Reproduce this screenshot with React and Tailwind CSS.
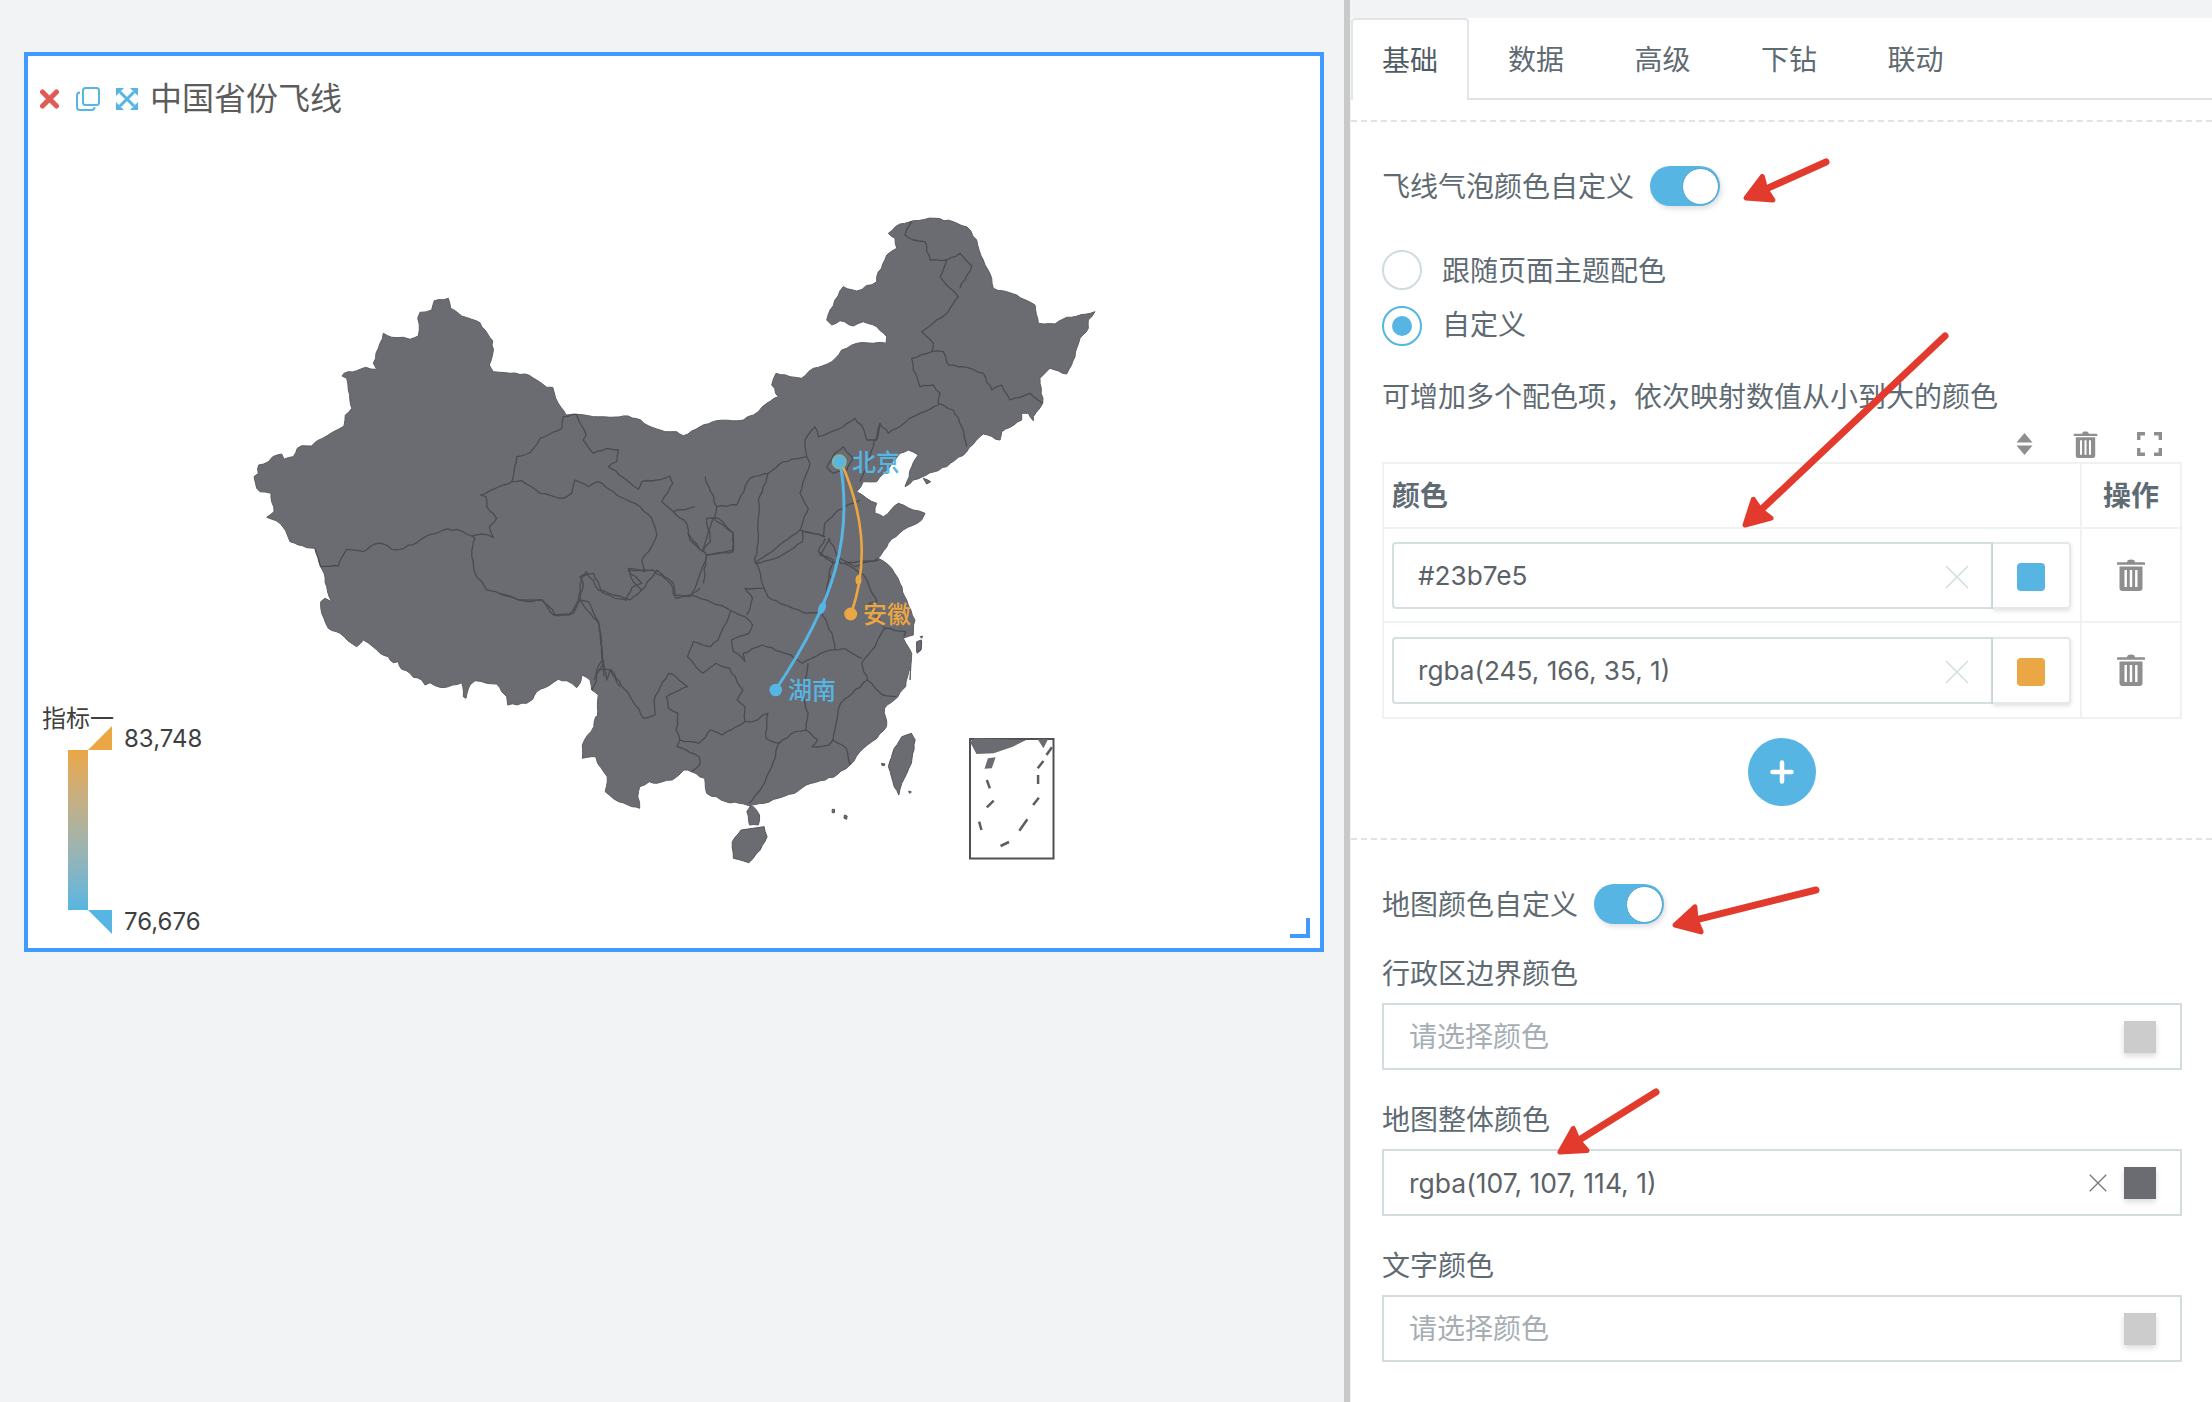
import React from "react";

const z3 = (a) => a.map(([x, y]) => [200 + x / 3, 280 + y / 3]);
const z2 = (a) => a.map(([x, y]) => [700 + x / 3, 180 + y / 3]);
const z4 = (a) => a.map(([x, y]) => [500 + x / 2.613, 500 + y / 3]);
const z11 = (a) => a.map(([x, y]) => [380 + x / 3, 640 + y / 3]);

let seed = 7;
const rnd = () => {
  seed = (seed * 16807) % 2147483647;
  return seed / 2147483647 - 0.5;
};
const jag = (pts, amp = 1.1, step = 5) => {
  const out = [];
  for (let i = 0; i < pts.length - 1; i++) {
    const [x0, y0] = pts[i];
    const [x1, y1] = pts[i + 1];
    const len = Math.hypot(x1 - x0, y1 - y0) || 1;
    const n = Math.max(1, Math.round(len / step));
    out.push([x0, y0]);
    for (let k = 1; k < n; k++) {
      const t = k / n;
      const j = rnd() * amp * 2;
      out.push([x0 + (x1 - x0) * t - ((y1 - y0) / len) * j, y0 + (y1 - y0) * t + ((x1 - x0) / len) * j]);
    }
  }
  out.push(pts[pts.length - 1]);
  return out;
};
const d = (pts, close, amp) => {
  const p = jag(pts, amp);
  return "M" + p.map(([x, y]) => `${x.toFixed(1)} ${y.toFixed(1)}`).join("L") + (close ? "Z" : "");
};

const outline = [
  ...z3([[162,590],[175,580],[176,555],[205,545],[218,530],[245,522],[252,538],[280,530],[292,505],[305,497],[335,498],[352,482],[395,458],[432,438],[436,405],[455,385],[445,330],[440,295],[426,288],[432,280],[470,272],[497,262],[530,268],[520,250],[535,205],[550,160],[575,172],[610,172],[630,178],[655,168],[658,150],[653,115],[660,97],[695,90],[703,62],[745,55],[752,85],[785,108],[815,118],[840,128],[855,150],[878,182],[878,222],[868,255],[880,275],[930,280],[975,282],[1010,300],[1040,322],[1058,322],[1075,370],[1098,405],[1130,403],[1180,410],[1230,412],[1285,408],[1322,420],[1345,437],[1395,455],[1430,455],[1450,467]]),
  ...z2([[0,740],[50,722],[130,720],[175,695],[200,670],[235,650],[215,615],[228,580],[270,590],[305,595],[340,565],[395,545],[425,510],[470,490],[520,490],[558,490],[560,470],[530,440],[490,425],[460,438],[420,422],[395,435],[380,420],[390,390],[430,320],[470,333],[530,305],[530,290],[560,225],[590,205],[585,175],[565,160],[600,132],[640,122],[705,115],[760,125],[800,140],[830,180],[850,240],[875,295],[880,325],[950,345],[1005,375],[1015,430],[1065,432],[1100,412],[1185,395],[1165,420],[1165,445],[1140,475],[1125,530],[1100,582],[1050,565],[1020,595],[1028,670],[1000,710],[1000,722],[985,700],[965,700],[965,720],[905,755],[900,780],[850,762],[800,815],[740,860],[690,878],[640,900],[615,920],[635,860],[655,825],[625,810],[600,820],[570,860],[530,905],[490,905],[470,935],[500,955],[530,970],[525,1000],[550,1010],[595,970],[640,990],[675,1000],[665,1020],[610,1050],[565,1090],[535,1135],[575,1165],[600,1210],[620,1260],[645,1320],[640,1365],[610,1375],[635,1420],[630,1500]]),
  ...z4([[1072,500],[1060,560],[1040,590],[1005,625],[1010,680],[985,715],[950,745],[915,795],[880,825],[850,840],[800,855],[770,880],[740,890],[690,910],[655,915],[645,935],[652,975],[675,975],[678,945],[660,918],[625,910],[590,905],[540,880],[535,835],[500,815],[480,810],[450,840],[410,850],[390,845],[365,860],[360,890],[365,925],[345,920],[310,905],[275,875],[280,830],[255,790],[250,770],[215,775],[215,735],[245,680],[250,650]]),
  ...z11([[652,230],[655,165],[635,150],[630,120],[605,105],[600,130],[590,143],[560,122],[535,118],[510,135],[470,155],[458,178],[440,190],[383,195],[380,170],[365,155],[350,132],[320,130],[285,122],[270,135],[258,175],[250,170],[245,128],[205,140],[180,142],[150,128],[135,135],[125,120],[100,112],[90,100],[65,88],[55,65],[40,68],[25,50],[0,40]]),
  ...z3([[490,1080],[470,1100],[420,1060],[385,1045],[365,1000],[362,965],[375,955],[395,965],[380,920],[372,880],[362,860],[345,805],[320,803],[270,785],[262,765],[240,730],[200,712],[222,695],[213,640],[180,635],[170,625]]),
];

const borders = [
  z3([[345,805],[362,860],[415,858],[440,808],[490,815],[525,792],[550,792],[575,808],[600,808],[650,788],[680,768],[730,750],[770,748],[815,768],[845,762],[880,772],[868,740],[890,715],[860,680],[858,650],[842,645],[935,605],[950,530],[990,518],[1020,475],[1050,462],[1085,445],[1090,410],[1130,403]]),
  z3([[815,768],[825,775],[815,815],[825,880],[860,930],[930,950],[985,965],[1025,960],[1058,990],[1065,1005],[1120,1000],[1140,960],[1165,965],[1195,1025],[1205,1100],[1212,1190]]),
  z3([[935,605],[965,602],[1020,640],[1090,655],[1115,640],[1125,600],[1165,620],[1195,605],[1250,645],[1320,680],[1355,715],[1370,765],[1355,800],[1325,840],[1335,875],[1285,865],[1300,905],[1325,930],[1290,960],[1240,945],[1195,930],[1160,875],[1140,890],[1150,910],[1140,960]]),
  z3([[1130,403],[1158,465],[1150,480],[1180,520],[1220,505],[1255,510],[1250,545],[1225,560],[1280,600],[1315,628],[1325,605],[1355,603],[1410,588],[1418,610],[1385,665],[1420,695],[1485,680]]),
  z3([[1325,930],[1370,870],[1420,910],[1425,945],[1470,950],[1500,925]]),
  z3([[1420,695],[1460,730],[1470,780],[1500,810]]),
  z4([[0,280],[50,300],[110,300],[140,345],[180,345],[205,300],[215,230],[245,220],[265,275],[300,295],[330,300],[345,262],[370,250],[335,210],[375,210],[400,210],[445,250],[460,295],[500,285],[540,300],[600,330],[640,350],[660,375],[650,400],[605,420],[610,455],[630,470],[640,485]]),
  z4([[210,300],[260,375],[270,490],[245,540]]),
  z4([[255,510],[290,510],[340,590],[375,655],[405,645],[405,590],[440,520],[460,530],[490,560],[435,590],[440,625],[465,640],[460,690],[470,720],[462,740],[520,770],[522,795],[500,815]]),
  z4([[605,330],[570,420],[550,440],[505,425],[490,470],[530,520],[565,490],[600,505],[635,570],[620,600],[640,620],[640,665],[580,705],[550,690],[520,730],[470,720]]),
  z4([[640,665],[660,665],[700,640],[695,715],[730,730],[770,695],[800,690],[805,640],[795,600],[805,490]]),
  z4([[730,725],[710,800],[685,860],[650,910]]),
  z4([[800,690],[830,720],[815,740],[860,735],[870,720],[905,745],[915,795]]),
  z4([[870,720],[890,610],[960,540],[1000,585],[1035,590]]),
  z4([[960,540],[945,490],[980,440],[1005,385]]),
  z4([[640,485],[635,460],[685,435],[760,465],[790,490],[850,455],[900,445],[945,475]]),
  z4([[875,450],[868,400],[840,340],[800,340],[745,315],[700,290],[690,265],[640,265],[660,295],[645,345]]),
  z4([[670,190],[730,170],[790,125],[790,95],[850,110]]),
  z4([[670,190],[690,265]]),
  z4([[835,165],[870,180],[860,220],[870,240]]),
  z4([[560,50],[530,150],[540,165],[510,265],[500,285]]),
  z4([[490,100],[530,155],[550,125],[540,55],[570,55],[610,100],[610,155],[540,165]]),
  z4([[900,190],[950,225],[975,285],[985,305],[965,310],[1005,385],[1060,395],[1055,410]]),
  z4([[860,225],[850,290],[840,340]]),
  z4([[835,165],[860,115],[890,190],[900,190],[990,180]]),
  z2([[320,830],[315,780],[345,740],[355,770],[430,740],[465,715],[490,745],[500,780],[530,780],[540,730],[565,760],[640,710],[715,675],[720,640],[700,615],[660,620],[640,570],[635,535],[695,515],[700,490],[665,455],[745,395],[775,350],[750,325],[720,290],[740,240],[690,240],[675,185],[640,180],[615,165],[635,125]]),
  z2([[740,240],[780,220],[815,258],[780,325]]),
  z2([[695,515],[730,515],[745,555],[790,560],[850,580],[875,630],[905,615],[930,660],[990,640],[1028,670]]),
  z2([[715,670],[760,690],[785,740],[800,800]]),
  z2([[540,730],[520,800],[505,850],[480,905]]),
  z2([[380,860],[400,825],[430,800],[460,835],[440,870],[400,880],[380,860]]),
  z2([[320,830],[250,845],[205,880],[175,960],[175,1060],[165,1150]]),
  z2([[205,880],[150,895],[110,975],[50,980],[15,890]]),
  z2([[320,830],[330,850],[300,940],[325,985],[300,1050],[370,1070],[375,1030],[415,990],[480,960]]),
  z2([[300,1050],[165,1150]]),
  z2([[375,1075],[355,1115],[400,1150],[420,1135],[465,1160],[535,1135]]),
  z2([[50,980],[45,1020],[100,1060],[100,1110],[20,1125],[10,1210]]),
  z11([[665,0],[668,60],[650,90],[650,120],[635,150]]),
  z11([[668,60],[680,120],[690,90],[720,140]]),
];

const islands = [
  z4([[1075,700],[1085,720],[1075,790],[1050,850],[1042,885],[1030,860],[1015,800],[1030,745],[1050,710]]),
  z4([[690,980],[698,1010],[680,1050],[650,1088],[610,1075],[607,1025],[630,990]]),
  z4([[868,928],[874,928],[874,938],[868,938]]),
  z4([[900,945],[907,948],[906,958],[899,955]]),
  z4([[997,790],[1006,792],[1004,797],[998,796]]),
  z4([[1068,873],[1075,876],[1070,880]]),
  z4([[1090,430],[1102,425],[1100,450],[1090,460]]),
  z4([[1098,410],[1104,408],[1102,415]]),
  z2([[650,1385],[664,1380],[662,1410],[650,1415]]),
  z2([[670,895],[692,905],[680,912]]),
];

const dashes = [
  [[1272,840],[1280,865]], [[1290,902],[1272,922]], [[1252,965],[1258,990]], [[1330,1026],[1308,1038]],
  [[1378,958],[1357,992]], [[1408,893],[1393,915]], [[1406,825],[1406,852]], [[1420,783],[1405,805]], [[1442,742],[1428,765]],
];

const mapOutline = d(outline, true, 0.9);
const mapBorders = borders.map((b) => d(b, false, 0.9));
const mapIslands = islands.map((b) => d(b, true, 0.5));

function ChinaMap() {
  return (
    <svg className="absolute inset-0 w-full h-full" viewBox="28 56 1292 892" fill="none">
      <path d={mapOutline} fill="#6b6b72" stroke="#5d5d63" strokeWidth="1" strokeLinejoin="round" />
      {mapIslands.map((p, i) => (
        <path key={i} d={p} fill="#6b6b72" stroke="#55555b" strokeWidth="1" />
      ))}
      {mapBorders.map((p, i) => (
        <path key={i} d={p} stroke="#4b4b51" strokeWidth="1.3" strokeLinejoin="round" />
      ))}

      <rect x="970" y="739" width="83.5" height="119.5" stroke="#505054" strokeWidth="2" />
      <path d={"M" + z4([[1228,725],[1240,715],[1375,720],[1340,740],[1290,760],[1245,762]]).map((p) => p.join(" ")).join("L") + "Z"} fill="#6b6b72" />
      <path d={"M" + z4([[1405,718],[1432,718],[1420,745]]).map((p) => p.join(" ")).join("L") + "Z"} fill="#6b6b72" />
      <path d={"M" + z4([[1275,775],[1295,772],[1285,805],[1266,806]]).map((p) => p.join(" ")).join("L") + "Z"} fill="#6b6b72" />
      {dashes.map((s, i) => {
        const [a, b] = z4(s);
        return <line key={i} x1={a[0]} y1={a[1]} x2={b[0]} y2={b[1]} stroke="#5c5c62" strokeWidth="2.5" />;
      })}

      <path d="M840 462C853 535 836 600 775.5 690" stroke="#56b5e2" strokeWidth="3" />
      <path d="M841 462C862 510 870 560 851 614" stroke="#eba743" strokeWidth="2.6" />
      <ellipse cx="822" cy="608" rx="3.6" ry="6.5" fill="#56b5e2" transform="rotate(22 822 608)" />
      <ellipse cx="858.5" cy="580" rx="3" ry="5" fill="#eba743" />
      <circle cx="839.3" cy="461.7" r="6.5" fill="#56b5e2" stroke="#84b3a0" strokeWidth="2" />
      <circle cx="850.7" cy="614" r="6.5" fill="#eba743" />
      <circle cx="775.7" cy="690" r="6.3" fill="#56b5e2" />
      <g fontSize="24" fontWeight="500" fontFamily="'Noto Sans CJK SC', sans-serif">
        <text x="852" y="471" fill="#56b5e2">北京</text>
        <text x="863" y="623" fill="#eba743">安徽</text>
        <text x="788" y="699" fill="#56b5e2">湖南</text>
      </g>
    </svg>
  );
}

function Arrow({ x1, y1, x2, y2, head = 27, spread = 0.5 }) {
  const a = Math.atan2(y1 - y2, x1 - x2);
  const px = (t) => x2 + Math.cos(a + t) * head;
  const py = (t) => y2 + Math.sin(a + t) * head;
  const mx = x2 + Math.cos(a) * head * 0.8;
  const my = y2 + Math.sin(a) * head * 0.8;
  return (
    <g>
      <line x1={x1} y1={y1} x2={mx} y2={my} stroke="#e33a2e" strokeWidth="7" strokeLinecap="round" />
      <polygon
        points={`${x2},${y2} ${px(spread)},${py(spread)} ${mx},${my} ${px(-spread)},${py(-spread)}`}
        fill="#e33a2e"
        stroke="#e33a2e"
        strokeWidth="5"
        strokeLinejoin="round"
      />
    </g>
  );
}

function Trash({ className }) {
  return (
    <svg className={className} viewBox="0 0 28 32">
      <path d="M10 3.2C10.5 1.2 11.5 .6 14 .6s3.5 .6 4 2.6h9c.6 0 1 .4 1 1v1.6H0V4.2c0-.6 .4-1 1-1z" fill="#8e8e8e" />
      <path d="M2.5 7.5h23V29a3 3 0 0 1-3 3h-17a3 3 0 0 1-3-3z" fill="#8e8e8e" />
      <path d="M7.5 11h2.4v17H7.5zM12.8 11h2.4v17h-2.4zM18.1 11h2.4v17h-2.4z" fill="#fff" />
    </svg>
  );
}

function XIcon({ className, color }) {
  return (
    <svg className={className} viewBox="0 0 24 24" fill="none" stroke={color} strokeWidth="1.6">
      <path d="M1 1L23 23M23 1L1 23" />
    </svg>
  );
}

function Toggle() {
  return (
    <div className="w-[70px] h-10 rounded-full bg-[#56b5e2] flex items-center justify-end pr-[1px] shadow-[2px_3px_5px_rgba(0,0,0,0.12)]">
      <div className="w-[37px] h-[37px] rounded-full bg-white border border-[#4aa3cf]" />
    </div>
  );
}

function Radio({ on }) {
  return (
    <div className={`w-10 h-10 rounded-full border-2 flex items-center justify-center ${on ? "border-[#56b5e2]" : "border-[#cfdbdf]"}`}>
      {on && <div className="w-5 h-5 rounded-full bg-[#56b5e2]" />}
    </div>
  );
}

const latin = "[font-family:'Inter','Noto_Sans_CJK_SC',sans-serif]";

function ColorRow({ value, color, last }) {
  return (
    <div className={`grid grid-cols-[1fr_98px] h-[94px] ${last ? "" : "border-b-2 border-[#eef2f3]"}`}>
      <div className="pl-[8px] pr-[9px] flex items-center border-r-2 border-[#eef2f3]">
        <div className="flex w-full h-[67px]">
          <div className={`flex-1 flex items-center border-2 border-[#d5dfe1] rounded-l-[4px] pl-[24px] pr-[12px] text-[26.2px] ${latin} text-[#5b6268]`}>
            <span className="flex-1 pt-[2px]">{value}</span>
            <XIcon className="w-6 h-6 mt-1 mr-[10px]" color="#d3dfdf" />
          </div>
          <div className="w-[78px] flex items-center justify-center border-y-2 border-r-2 border-[#e3e8ea] rounded-r-[4px] shadow-[0_2px_4px_rgba(0,0,0,0.12)]">
            <div className="w-7 h-7 rounded-[4px] mt-1" style={{ background: color }} />
          </div>
        </div>
      </div>
      <div className="flex items-center justify-center">
        <Trash className="w-7 h-8" />
      </div>
    </div>
  );
}

function ColorField({ value }) {
  return (
    <div className="mt-2 h-[67px] border-2 border-[#d3dde0] flex items-center pl-[25px] pr-[24px] text-[28px]">
      {value ? (
        <>
          <span className={`flex-1 pt-[1px] text-[#5b6268] text-[26.5px] ${latin}`}>{value}</span>
          <XIcon className="w-[18px] h-[18px] mr-[17px]" color="#6d7378" />
          <div className="w-8 h-8 bg-[#6b6b72] shadow-[0_3px_6px_rgba(0,0,0,0.15)]" />
        </>
      ) : (
        <>
          <span className="flex-1 pt-[3px] text-[#a6aeb3]">请选择颜色</span>
          <div className="w-8 h-8 bg-[#cccccc] shadow-[0_3px_6px_rgba(0,0,0,0.15)]" />
        </>
      )}
    </div>
  );
}

const Dashed = ({ className }) => <div className={`border-t-2 border-dashed border-[#dfe3e6] ${className}`} />;

export default function App() {
  const tabs = ["数据", "高级", "下钻", "联动"];
  return (
    <div className="relative w-[2212px] h-[1402px] overflow-hidden flex bg-[#f1f3f5] text-[28px] leading-10 text-[#5f6b73] [font-family:'Liberation_Sans','Noto_Sans_CJK_SC',sans-serif]">
      <div className="w-[1344px] shrink-0 pt-[52px] pl-6 pr-5">
        <div className="relative h-[900px] border-4 border-[#3f9bff] bg-white">
          <ChinaMap />
          <div className="relative flex items-center pt-[2px] pl-3 h-[84px]">
            <svg className="w-[19px] h-5" viewBox="0 0 19 20" fill="none" stroke="#e25a56" strokeWidth="5" strokeLinecap="round">
              <path d="M2.5 3L16.5 17M16.5 3L2.5 17" />
            </svg>
            <svg className="ml-[17px] w-6 h-6" viewBox="0 0 24 24" fill="none" stroke="#56b5e2" strokeWidth="2">
              <rect x="7" y="1" width="16" height="17" rx="2.5" />
              <path d="M4 5.5A3 3 0 0 0 1 8.5V20a3 3 0 0 0 3 3h11.5a3 3 0 0 0 3-3" />
            </svg>
            <svg className="ml-4 w-[22px] h-[22px]" viewBox="0 0 22 22" fill="none" stroke="#56b5e2" strokeWidth="3">
              <path d="M4 4L18 18M18 4L4 18" />
              <path d="M0 0h8L0 8zM22 0h-8L22 8zM0 22h8L0 14zM22 22h-8L22 14z" fill="#56b5e2" stroke="none" />
            </svg>
            <span className="ml-[12px] text-[32px] text-[#5c5c5c]">中国省份飞线</span>
          </div>
          <div className="absolute left-[14px] top-[643px] text-2xl leading-10 text-[#3f3f3f]">指标一</div>
          <div className={`absolute left-[96px] top-[663px] leading-10 text-[#3f3f3f] text-[24px] ${latin}`}>83,748</div>
          <div className={`absolute left-[96px] top-[846px] leading-10 text-[#3f3f3f] text-[24px] ${latin}`}>76,676</div>
          <div className="absolute left-10 top-[694px] w-5 h-40 bg-gradient-to-b from-[#eba743] to-[#56b5e2]" />
          <svg className="absolute left-[60px] top-[670px] w-6 h-6" viewBox="0 0 24 24"><path d="M0 24L24 0V24z" fill="#eba743" /></svg>
          <svg className="absolute left-[60px] top-[854px] w-6 h-6" viewBox="0 0 24 24"><path d="M0 0H24V24z" fill="#56b5e2" /></svg>
          <div className="absolute right-[10px] bottom-[10px] w-5 h-5 border-r-4 border-b-4 border-[#3f9bff]" />
        </div>
      </div>

      <div className="w-[6px] shrink-0 bg-[#c8cac9]" />
      <div className="w-px shrink-0" />

      <div className="flex-1 mt-[18px] bg-white">
        <div className="flex h-[82px] border-b-2 border-[#dfe3e6]">
          <div className="w-[118px] h-[82px] border-2 border-b-0 border-[#e3e6e8] rounded-t-[4px] bg-white flex items-center justify-center text-[#505c64] pt-[4px]">基础</div>
          {tabs.map((t) => (
            <div key={t} className="w-[126.5px] flex items-center pl-[39px] pt-[6px]">{t}</div>
          ))}
        </div>
        <Dashed className="mt-5" />

        <div className="pl-[31px] pr-[30px]">
          <div className="mt-[44px] flex items-center gap-[16px] h-10">
            <span className="pt-[3px]">飞线气泡颜色自定义</span>
            <Toggle />
          </div>
          <div className="mt-[44px] flex items-center gap-5 h-10">
            <Radio />
            <span className="pt-[3px]">跟随页面主题配色</span>
          </div>
          <div className="mt-4 flex items-center gap-5 h-10">
            <Radio on />
            <span>自定义</span>
          </div>
          <div className="mt-[30px] h-10 pt-[2px]">可增加多个配色项，依次映射数值从小到大的颜色</div>

          <div className="mt-4 h-6 flex justify-end pr-[20px]">
            <svg className="w-[17px] h-6" viewBox="0 0 17 24" fill="#8e8e8e">
              <path d="M8.5 1L16.5 10.5H.5zM8.5 23L.5 13.5H16.5z" />
            </svg>
            <Trash className="ml-[40px] w-[25px] h-[27px] -mt-px" />
            <svg className="ml-[39px] w-[25px] h-6" viewBox="0 0 25 24" fill="none" stroke="#8e8e8e" strokeWidth="3.4">
              <path d="M1.7 8V1.7H8M17 1.7h6.3V8M1.7 16v6.3H8M17 22.3h6.3V16" />
            </svg>
          </div>

          <div className="mt-[6px] border-2 border-[#eef2f3]">
            <div className="grid grid-cols-[1fr_98px] h-[65px] border-b-2 border-[#eef2f3] font-bold text-[#5f6b73]">
              <div className="pl-[8px] pt-[2px] flex items-center border-r-2 border-[#eef2f3]">颜色</div>
              <div className="flex items-center justify-center pt-[2px]">操作</div>
            </div>
            <ColorRow value="#23b7e5" color="#56b5e2" />
            <ColorRow value="rgba(245, 166, 35, 1)" color="#eba743" last />
          </div>

          <div className="mt-[19px] flex justify-center">
            <div className="w-[68px] h-[68px] rounded-full bg-[#56b5e2] flex items-center justify-center">
              <svg className="w-6 h-6" viewBox="0 0 24 24" fill="none" stroke="#fff" strokeWidth="4.5" strokeLinecap="round">
                <path d="M12 2.5V21.5M2.5 12H21.5" />
              </svg>
            </div>
          </div>
        </div>

        <Dashed className="mt-8" />

        <div className="pl-[31px] pr-[30px]">
          <div className="mt-[44px] flex items-center gap-[16px] h-10">
            <span className="pt-[3px]">地图颜色自定义</span>
            <Toggle />
          </div>
          <div className="mt-[31px] h-10">行政区边界颜色</div>
          <ColorField />
          <div className="mt-[31px] h-10">地图整体颜色</div>
          <ColorField value="rgba(107, 107, 114, 1)" />
          <div className="mt-[31px] h-10">文字颜色</div>
          <ColorField />
        </div>
      </div>

      <svg className="absolute inset-0 w-full h-full pointer-events-none" viewBox="0 0 2212 1402">
        <Arrow x1={1826} y1={162} x2={1746} y2={198} />
        <Arrow x1={1945} y1={336} x2={1745} y2={525} />
        <Arrow x1={1816} y1={890} x2={1675} y2={925} />
        <Arrow x1={1656} y1={1092} x2={1560} y2={1152} />
      </svg>
    </div>
  );
}
